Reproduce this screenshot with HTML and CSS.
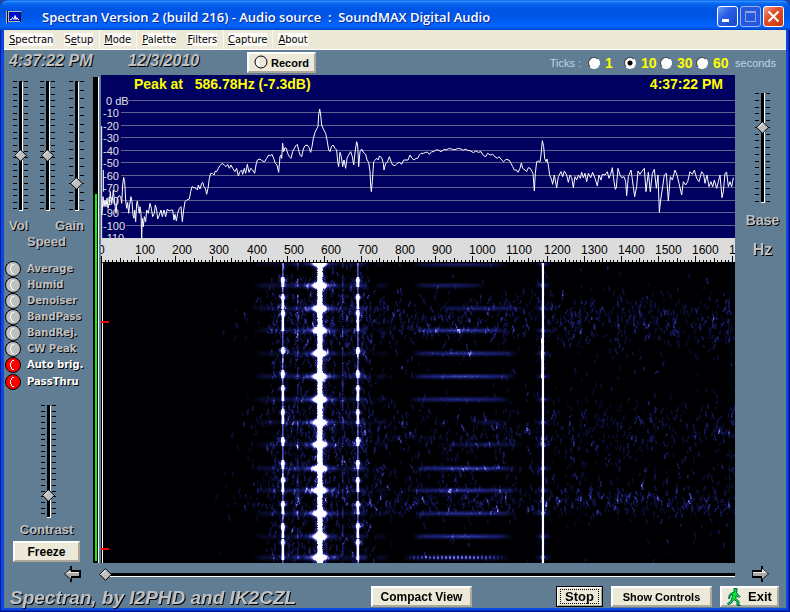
FILE: index.html
```html
<!DOCTYPE html>
<html lang="en">
<head>
<meta charset="utf-8">
<title>Spectran</title>
<link rel="stylesheet" href="styles.css">
</head>
<body>
<div class="window">
  <header class="titlebar">
    <svg class="app-icon" viewBox="0 0 16 14" aria-hidden="true"><path fill="#b8b8b8" d="M0 1h15v11H2L0 14z"/><path fill="#111" d="M1 1h1v12H1zM14 2h1v10h-1z"/><path fill="#0010c8" d="M3 2h11v9H3z"/><path fill="none" stroke="#fff" d="M4 9.500h1.500l1-2 1.500 2 1-4 1 4 1-2 1 2h1"/></svg>
    <h1 class="title">Spectran Version 2 (build 216) - Audio source &nbsp;:&nbsp; SoundMAX Digital Audio</h1>
    <div class="window-buttons">
      <button class="win-btn" aria-label="Minimize"><svg viewBox="0 0 19 19"><path fill="#fff" d="M4 12h7v3H4z"/></svg></button>
      <button class="win-btn win-btn-off" aria-label="Maximize"><svg viewBox="0 0 19 19"><path fill="none" stroke="#8ea5ee" d="M4.500 5.500h10v9h-10zM4 4.500h11"/></svg></button>
      <button class="win-btn win-btn-close" aria-label="Close"><svg viewBox="0 0 19 19"><path stroke="#fff" stroke-width="2" d="M4.500 4.500l10 10M14.500 4.500l-10 10"/></svg></button>
    </div>
  </header>
  <nav class="menubar">
    <button class="menu"><span><u>S</u>pectran</span></button>
    <button class="menu"><span>S<u>e</u>tup</span></button>
    <button class="menu menu-lit"><span><u>M</u>ode</span></button>
    <button class="menu"><span><u>P</u>alette</span></button>
    <button class="menu"><span><u>F</u>ilters</span></button>
    <button class="menu menu-lit"><span><u>C</u>apture</span></button>
    <button class="menu"><span><u>A</u>bout</span></button>
  </nav>

  <div class="toolbar">
    <time class="clock">4:37:22 PM</time>
    <time class="clock date">12/3/2010</time>
    <button class="btn record"><svg viewBox="0 0 15 15" aria-hidden="true"><circle cx="7" cy="7" r="6" fill="#ece9d8" stroke="#000"/><path d="M5 3.500a4.500 4.500 0 0 0 0 7" fill="none" stroke="#fff" stroke-width="2"/></svg>Record</button>
    <fieldset class="ticks">
      <span class="hint">Ticks :</span>
      <label class="tick"><input type="radio" name="ticks">1</label>
      <label class="tick"><input type="radio" name="ticks" checked>10</label>
      <label class="tick"><input type="radio" name="ticks">30</label>
      <label class="tick"><input type="radio" name="ticks">60</label>
      <span class="hint">seconds</span>
    </fieldset>
  </div>

  <main class="main">
    <section class="side">
      <div class="levels">
        <div class="slider"><svg viewBox="0 0 15 130" aria-hidden="true"><path class="marks" d="M2 0v129M13 0v129" stroke-dasharray="1 5.350"/><path d="M6 0h3v129H6z"/><path fill="#fff" d="M9 1h1v129H6v-1h3z"/></svg><input id="vol" type="range" value="42"></div>
        <div class="slider"><svg viewBox="0 0 15 130" aria-hidden="true"><path class="marks" d="M2 0v129M13 0v129" stroke-dasharray="1 5.350"/><path d="M6 0h3v129H6z"/><path fill="#fff" d="M9 1h1v129H6v-1h3z"/></svg><input id="speed" type="range" value="42"></div>
        <div class="slider"><svg viewBox="0 0 15 130" aria-hidden="true"><path class="marks" d="M2 0v129M13 0v129" stroke-dasharray="1 7.500"/><path d="M6 0h3v129H6z"/><path fill="#fff" d="M9 1h1v129H6v-1h3z"/></svg><input id="gain" type="range" value="18"></div>
      </div>
      <div class="level-names"><label for="vol">Vol</label><label for="gain">Gain</label></div>
      <label class="caption" for="speed">Speed</label>
      <div class="filters">
        <label><input type="checkbox">Average</label>
        <label><input type="checkbox">Humid</label>
        <label><input type="checkbox">Denoiser</label>
        <label><input type="checkbox">BandPass</label>
        <label><input type="checkbox">BandRej.</label>
        <label><input type="checkbox">CW Peak</label>
        <label><input type="checkbox" checked>Auto brig.</label>
        <label><input type="checkbox" checked>PassThru</label>
      </div>
      <div class="slider slider-contrast"><svg viewBox="0 0 15 113" aria-hidden="true"><path class="marks" d="M2 0v111M13 0v111" stroke-dasharray="1 4.700"/><path d="M6 0h3v112H6z"/><path fill="#fff" d="M9 1h1v112H6v-1h3z"/></svg><input id="contrast" type="range" value="16"></div>
      <label class="caption" for="contrast">Contrast</label>
      <button class="btn freeze">Freeze</button>
    </section>

    <div class="meter"><div class="meter-fill"></div></div>

    <section class="display">
      <svg class="spectrum" viewBox="0 0 634 188">
        <rect width="634" height="163" fill="#000060"/>
        <g id="grid"></g>
        <text class="readout" x="33" y="14" xml:space="preserve">Peak at   586.78Hz (-7.3dB)</text>
        <text class="readout" x="622" y="14" text-anchor="end">4:37:22 PM</text>
        <svg width="634" height="163" viewBox="3 0 1902 489">
          <g class="trace">
            <path d="M5 153V489M10 285V350"/>
            <polyline points="6,420 9,365 12,395 15,375 18,395 21,370 24,400 28,385 31,350 34,385 37,375 40,345 43,375 48,415 52,370 57,362 62,365 65,385 68,330 71,307 74,320 77,375 80,400 83,382 86,415 89,390 93,365 96,380 99,420 102,430 104,405 107,440 110,385 112,378 115,400 118,415 120,395 123,415 125,489 127,430 130,455 133,425 137,440 140,405 145,415 150,385 154,400 158,425 163,415 166,390 170,405 173,432 178,420 183,405 187,425 192,405 197,425 202,402 207,408 213,405 218,405 222,435 225,418 229,438 233,415 238,400 243,395 247,440 251,405 255,380 260,375 268,372 272,350 276,335 282,338 288,340 292,345 295,330 300,342 305,325 308,322 312,335 316,340 320,358 324,340 328,310 332,295 337,295 342,300 346,288 350,290 355,280 360,272 366,265 373,270 378,275 383,268 388,280 393,270 398,280 405,290 410,280 415,303 420,290 425,285 428,298 433,280 437,295 442,268 447,292 452,280 458,285 464,295 468,270 472,255 480,252 487,258 494,260 500,250 506,240 512,242 516,238 521,250 526,265 531,270 536,292 540,245 543,240 545,250 548,205 551,230 555,218 559,220 563,235 568,245 573,250 578,230 583,220 588,212 592,208 597,230 601,242 605,245 610,222 615,212 622,210 627,218 632,232 636,215 640,190 645,172 650,162 654,155 656,120 659,102 662,120 665,150 670,162 677,175 682,200 686,225 690,230 694,215 699,210 705,220 710,225 713,260 716,275 720,232 724,245 728,275 732,255 737,280 741,250 746,240 752,230 757,245 761,270 766,225 770,200 773,210 776,275 780,230 785,222 790,232 797,238 801,255 806,262 810,290 812,330 814,350 817,320 821,260 826,255 830,250 835,255 838,243 845,248 850,265 852,285 857,265 862,262 868,245 874,262 878,270 885,272 892,265 898,262 905,268 911,255 918,255 924,255 930,240 936,250 942,255 948,250 953,250 958,240 963,235"/>
            <polyline transform="translate(945)" points="18,235 25,235 32,232 38,232 43,238 50,230 57,230 62,225 70,225 78,230 86,224 95,224 103,220 112,223 120,224 130,220 138,222 145,226 150,222 158,226 168,228 175,233 182,228 190,232 198,230 206,242 212,245 218,235 226,240 233,238 240,245 247,250 252,245 260,255 266,260 273,253 282,255 288,265 293,275 298,285 304,285 309,292 315,280 319,264 323,280 330,285 335,290 340,278 346,280 351,290 354,295 358,348 361,295 365,260 370,258 375,262 378,240 382,197 386,215 389,250 393,260 396,252 400,270 404,300 410,315 413,328 418,300 425,338 430,305 438,290 443,305 448,288 455,300 460,322 465,300 470,308 475,338 480,305 485,315 490,300 496,310 500,292 505,308 510,295 515,320 520,295 527,308 533,292 540,310 547,333 552,300 558,315 562,298 570,300 577,290 582,310 587,298 592,278 597,320 601,343 604,338 609,280 615,300 620,308 627,305 632,320 635,362 640,305 648,285 655,335 659,365 665,335 669,288 675,298 680,290 688,280 693,350 700,292 706,350 712,295 718,283 724,340 729,300 733,412 737,375 743,335 748,300 754,295 760,378 766,305 772,315 780,285 786,300 792,325 800,360 805,320 812,330 818,320 825,290 832,298 838,285 845,310 852,320 860,290 866,298 870,325 876,300 882,335 888,320 893,335 898,315 905,340 910,320 915,300 921,368 925,350 930,295 935,292 940,335 945,320 950,335 955,308"/>
          </g>
        </svg>
        <rect y="163" width="634" height="25" fill="#dcdcdc"/>
        <path fill="#000" d="M0 187h634v1H0z"/>
        <g id="ruler"></g>
      </svg>
      <canvas class="waterfall" id="waterfall" width="634" height="300"></canvas>
    </section>

    <section class="base">
      <div class="slider slider-base"><svg viewBox="0 0 15 110" aria-hidden="true"><path class="marks" d="M2 0v109M13 0v109" stroke-dasharray="1 5.750"/><path d="M6 0h3v109H6z"/><path fill="#fff" d="M9 0h1v110H6v-1h3z"/></svg><input id="base" type="range" value="71"></div>
      <label class="base-name" for="base">Base</label>
      <span class="unit">Hz</span>
    </section>
  </main>

  <div class="scroll">
    <button class="arrow" aria-label="Shift left"><svg viewBox="0 0 17 16"><path d="M6 0h2v4h9v8H8v4H6v-3L0 8l6-5z"/><path fill="#a8a8a8" d="M1 8l6-4v2h8v4H7v3z"/><path fill="#e8e8e8" d="M1 8l5-4v2h9v1H6z"/></svg></button>
    <input class="position" type="range" value="0" aria-label="Position">
    <button class="arrow" aria-label="Shift right"><svg viewBox="0 0 17 16"><path d="M0 4h9V0h2v3l6 5-6 5v3H9v-4H0z"/><path fill="#a8a8a8" d="M1 6h9V3l6 5-6 5v-3H1z"/><path fill="#e8e8e8" d="M1 6h9V3l5 4H1z"/></svg></button>
  </div>

  <footer class="footer">
    <p class="credit">Spectran, by I2PHD and IK2CZL</p>
    <button class="btn wide">Compact View</button>
    <button class="btn stop"><span>Stop</span></button>
    <button class="btn wide small">Show Controls</button>
    <button class="btn exit"><svg viewBox="0 0 15 18" aria-hidden="true"><path fill="#00f020" stroke="#006060" d="M7 .5h3v3H9l2 3 2 2-1 1-3-2v3l3 3v4h2H10v-4l-3-2-3 4-3 1-.5-1 3-2 2-5v-2l-2 1-1 3H1.500l1-4 3-2H7z"/></svg>Exit</button>
  </footer>
</div>
<script src="script.js"></script>
</body>
</html>
```
FILE: styles.css
```css
* { box-sizing: border-box; }

body {
  margin: 0;
  background: #24469a;
  font-family: "Liberation Sans", Arial, sans-serif;
  font-size: 12px;
  color: #000;
}

button, input { font: inherit; margin: 0; }
button { padding: 0; border: 0; background: none; color: inherit; white-space: nowrap; }
svg { display: block; }

.window {
  min-height: 100vh;
  display: flex;
  flex-direction: column;
  padding: 0 4px 4px;
  border-radius: 8px 8px 0 0;
  background: #0a48e0;
  box-shadow: inset 1px 0 #0019a8, inset -1px 0 #00138c, inset -2px 0 #0030c0, inset 0 -1px #00138c, inset 0 -2px #0030c0;
}

/* Title bar */
.titlebar {
  display: flex;
  align-items: center;
  height: 30px;
  margin: 0 -4px;
  padding: 3px 6px 0 6px;
  border-radius: 8px 8px 0 0;
  background: linear-gradient(#0058ee 0, #3593ff 4%, #1474f2 8%, #0461ec 16%, #0055e5 30%, #0055e8 55%, #0262fb 80%, #0261fa 90%, #0243c4 100%);
}
.app-icon { width: 16px; height: 14px; }
.title {
  flex: 1;
  margin: 0 0 0 20px;
  font: 600 13px/18px "Open Sans", sans-serif;
  color: #fff;
  text-shadow: 1px 1px #0a2a90;
  white-space: nowrap;
}
.window-buttons { display: flex; gap: 2px; }
.win-btn {
  width: 21px;
  height: 21px;
  border: 1px solid #fff;
  border-radius: 3px;
  background: linear-gradient(135deg, #6f9cf8, #2a5fe6 40%, #1a46c8);
}
.win-btn-off { border-color: #9ab4f4; background: #2558dc; }
.win-btn-close { background: linear-gradient(135deg, #f0a088, #e0502c 40%, #c83808); }

/* Menus */
.menubar {
  display: flex;
  height: 20px;
  background: #ece9d8;
  border-bottom: 1px solid #fff;
  font: 11px/13px "DejaVu Sans Condensed", "DejaVu Sans", sans-serif;
}
.menu { padding: 0 5px 0 4px; border: 1px solid transparent; border-width: 0 1px; }
.menu span { display: block; background: #fcfbf8; }
.menu-lit { border-color: #faf9f2; }

/* Raised buttons */
.btn {
  display: flex;
  align-items: center;
  justify-content: center;
  height: 21px;
  background: #ece9d8;
  border: 2px solid;
  border-color: #fff #aca899 #aca899 #fff;
  font-weight: bold;
}

.toolbar {
  display: flex;
  align-items: center;
  height: 25px;
  padding: 0 10px 0 5px;
  background: #607d94;
}
.clock {
  width: 119px;
  font: italic bold 16px/20px "Liberation Sans", Arial, sans-serif;
  color: #c0c0c0;
  text-shadow: 1px 1px #000;
  padding-bottom: 3px;
}
.record { width: 69px; gap: 2px; font-size: 11px; }
.record svg { width: 15px; height: 15px; }
.ticks {
  display: flex;
  align-items: center;
  margin: 0 0 0 auto;
  padding: 0;
  border: 0;
  font-size: 11px;
}
.hint { color: #b4d8f0; }
.hint:first-child { margin-right: 7px; }
.hint:last-child { margin-left: 3px; }
.tick {
  display: flex;
  align-items: center;
  gap: 5px;
  width: 36px;
  font-size: 14px;
  font-weight: bold;
  color: #ff0;
}
.tick input {
  appearance: none;
  flex: none;
  width: 12px;
  height: 12px;
  border: 1px solid;
  border-color: #404040 #fff #fff #404040;
  border-radius: 50%;
  background: #fff;
}
.tick input:checked { background: radial-gradient(circle, #000 2px, #fff 3px); }

/* Control panel */
.main {
  display: grid;
  grid-template-columns: 89px 8px 1fr 51px;
  flex: 1;
  background: #607d94;
}
.side { display: flex; flex-direction: column; padding-top: 6px; }
.levels { display: grid; grid-template-columns: 27px 29px auto; padding-left: 9px; }

.slider { display: grid; width: 15px; height: 130px; }
.slider svg, .slider input { grid-area: 1 / 1; }
.slider svg { width: 15px; height: 100%; }
.marks { stroke: #000; stroke-width: 4; shape-rendering: crispEdges; }
.slider input {
  appearance: none;
  writing-mode: vertical-lr;
  direction: rtl;
  width: 15px;
  height: 100%;
  background: none;
}
.slider input::-webkit-slider-runnable-track { background: none; }
input[type="range"]::-webkit-slider-thumb {
  appearance: none;
  width: 13px;
  height: 13px;
  border: 0;
  background: url("data:image/svg+xml,%3Csvg xmlns='http://www.w3.org/2000/svg' viewBox='0 0 13 13'%3E%3Cpath d='M6.500 .7l5.800 5.800-5.800 5.800L.7 6.500z' fill='%23c0c0c0' stroke='%23000'/%3E%3Cpath d='M2 6.500L6.500 2' stroke='%23fff'/%3E%3C/svg%3E") center / 13px 13px no-repeat;
}
.slider-contrast { height: 113px; margin: 14px 0 0 37px; }

.level-names, .caption {
  font-size: 13px;
  font-weight: bold;
  line-height: 16px;
  color: #c0c0c0;
  text-shadow: 1px 1px #000;
}
.level-names { display: flex; justify-content: space-between; padding: 7px 9px 0 5px; }
.caption { text-align: center; padding-right: 4px; }
.slider-contrast + .caption { padding-top: 4px; }

.filters { margin-top: 11px; padding-left: 1px; }
.filters label {
  display: flex;
  align-items: center;
  gap: 6px;
  height: 16px;
  font: bold 10px/16px "DejaVu Sans", Verdana, sans-serif;
  color: #c0c0c0;
  text-shadow: 1px 1px #000;
  white-space: nowrap;
}
.filters label:last-child { height: 18px; }
.filters input {
  appearance: none;
  flex: none;
  width: 16px;
  height: 16px;
  border: 1px solid #000;
  border-radius: 50%;
  background: radial-gradient(circle at 10px 7px, #c0c0c0 5px, #fff 5px, #fff 6px, transparent 6px) 0 0 / 8px 14px no-repeat #c0c0c0;
}
.filters label:has(:checked) { color: #fff; }
.filters input:checked { background: radial-gradient(circle at 10px 7px, #f00 5px, #fff 5px, #fff 6px, transparent 6px) 0 0 / 8px 14px no-repeat #f00; }
.freeze { width: 67px; margin: 3px 0 0 9px; }

/* Input level */
.meter {
  width: 6px;
  margin-top: 2px;
  padding: 117px 1px 2px 2px;
  background: #000;
  border-right: 1px solid #fff;
}
.meter-fill { width: 2px; height: 100%; background: #0f0; }

/* Spectrum and waterfall */
.spectrum, .waterfall { display: block; width: 100%; height: auto; }
.spectrum { overflow: hidden; }
.readout { font-size: 14px; font-weight: bold; fill: #ff0; white-space: pre; }
.db { font-size: 11px; fill: #e0e0e0; }
.freq { font-size: 12px; fill: #000; }
.trace { fill: none; stroke: #fff; stroke-width: 3; }

.base {
  display: flex;
  flex-direction: column;
  align-items: center;
  padding: 18px 0 0 4px;
  font-weight: bold;
  color: #c0c0c0;
  text-shadow: 1px 1px #000;
}
.slider-base { height: 110px; }
.base-name { margin-top: 8px; font-size: 14px; line-height: 18px; }
.unit { margin-top: 12px; font-size: 16px; line-height: 18px; }

/* Bottom rows */
.scroll {
  display: grid;
  grid-template-columns: 35px 1fr 51px;
  align-items: center;
  height: 22px;
  padding: 0 0 0 60px;
  background: #607d94;
}
.arrow { width: 17px; }
.scroll .arrow:last-child { margin-left: 17px; }
.position {
  appearance: none;
  width: 100%;
  height: 13px;
  background: linear-gradient(#000 3px, #fff 3px) 6px 5px / 100% 4px no-repeat;
}

.footer {
  display: flex;
  align-items: center;
  height: 23px;
  padding: 0 7px 0 6px;
  background: #607d94;
}
.footer .btn { margin-left: 8px; }
.credit {
  width: 353px;
  margin: 0;
  font: italic bold 19px/22px "Liberation Sans", Arial, sans-serif;
  color: #c0c0c0;
  text-shadow: 1px 1px #000;
  white-space: nowrap;
  padding-top: 3px;
}
.wide { width: 101px; }
.small { font-size: 11px; }
.footer .stop { width: 47px; padding: 1px; margin-left: auto; border: 1px solid #000; box-shadow: inset 1px 1px #fff, inset -1px -1px #aca899; font-size: 13px; }
.stop span { width: 39px; border: 1px dotted #000; line-height: 13px; }
.exit { width: 59px; gap: 6px; font-size: 13px; }
.exit svg { width: 15px; height: 18px; }
```
FILE: script.js
```js
const NS = "http://www.w3.org/2000/svg";

function add(parent, name, attrs, text) {
  const el = document.createElementNS(NS, name);
  for (const key in attrs) el.setAttribute(key, attrs[key]);
  if (text) el.textContent = text;
  parent.appendChild(el);
}

// Level grid, one line every 10 dB
const grid = document.getElementById("grid");
for (let i = 0; i <= 10; i++) {
  const y = 25 + Math.floor(i * 12.5);
  const x = i === 0 ? 27 : i === 10 ? 25 : 20;
  add(grid, "rect", { x, y, width: 634 - x, height: 1, fill: "#62628e" });
  add(grid, "text", { x: i ? 2 : 5, y: y + 5, class: "db" }, i ? String(-10 * i) : "0 dB");
}
add(grid, "text", { x: 2, y: 167, class: "db" }, "-110");

// Frequency ruler, one tick every 10 Hz
const ruler = document.getElementById("ruler");
for (let f = 0; f <= 1700; f += 10) {
  const x = Math.round(f * 0.3713);
  const h = f % 100 === 0 ? 6 : f % 50 === 0 ? 4 : 2;
  add(ruler, "rect", { x, y: 187 - h, width: 1, height: h, fill: "#000" });
  if (f % 100 === 0) add(ruler, "text", { x: x - 3, y: 179, class: "freq" }, String(f));
}

// Waterfall
const canvas = document.getElementById("waterfall");
const W = canvas.width, H = canvas.height;
const field = new Float32Array(W * H);
let seed = 20101203;
function rnd() {
  seed = (seed * 1664525 + 1013904223) >>> 0;
  return seed / 4294967296;
}
function put(x, y, v) {
  x = Math.round(x); y = Math.round(y);
  if (x >= 0 && x < W && y >= 0 && y < H) field[y * W + x] += v;
}
function bell(d, s) { return Math.exp(-d * d / (2 * s * s)); }

const pulses = [0, 22, 45, 67, 90, 113, 136, 159, 181, 205, 227, 250, 273, 294];
const keyed = [[15, 22], [32, 44], [48, 66], [85, 89], [108, 113], [123, 136], [147, 159], [175, 181], [198, 204], [215, 227], [239, 249], [261, 273], [277, 295]];

function density(x, y) {
  const bands = 0.7 * bell(y - 56, 14) + 0.5 * bell(y - 165, 13) + 0.2 * bell(y - 208, 12) + bell(y - 237, 7);
  let d = 0.05 + bands;
  if (x > 165 && x < 270) d += 0.4;
  if (y > 262 && x > 280) d *= 0.4;
  if (y < 22 && x > 275) d *= 0.3;
  if (x < 170) d *= bell(170 - x, 22) * 0.6;
  return d;
}
for (let i = 0; i < 14000; i++) {
  let x = rnd() * W, y = rnd() * H;
  if (rnd() > density(x, y)) continue;
  const len = 2 + rnd() * 4, slope = (rnd() - 0.5) * 0.9, v = 0.08 + rnd() * rnd() * 0.26;
  for (let k = 0; k < len; k++, y++, x += slope) {
    put(x, y, v);
    put(x + 1, y, v * 0.6);
  }
}

// Faint harmonics
[[35, 0.14], [145, 0.14], [196, 0.26], [241, 0.3], [293, 0.14], [404, 0.16], [479, 0.2], [516, 0.3], [553, 0.14], [627, 0.22]].forEach(([x, v]) => {
  for (let y = 0; y < H; y++) {
    const gate = x > 150 && x < 260 ? 1 : Math.min(1, density(x, y));
    if (Math.sin(y * 0.35 + x) + rnd() > 0.2) {
      put(x, y, v * gate);
      put(x + 1, y, v * gate * 0.5);
    }
  }
});

// Speech-like bars
const bars = [[1, 318, 400, 0.24], [22, 319, 378, 0.26], [45, 345, 418, 0.26], [67, 320, 400, 0.4], [90, 318, 410, 0.36], [113, 318, 408, 0.42], [136, 315, 402, 0.34], [159, 375, 402, 0.16], [181, 350, 415, 0.2], [205, 321, 408, 0.42], [227, 315, 412, 0.36], [250, 320, 408, 0.36], [273, 318, 405, 0.4], [294, 310, 400, 0.4]];
bars.forEach(([y, a, b, v]) => {
  for (let x = a - 8; x < b + 8; x++) {
    const t = (x - a) / (b - a);
    const e = Math.min(1, (x - a + 8) / 10, (b + 8 - x) / 14) * (0.6 + 0.45 * bell(t - 0.5, 0.25));
    const beat = y === 294 ? (x % 4 < 2 ? 1.5 : 0.5) : 1;
    for (let k = -3; k <= 3; k++) put(x, y + k, v * e * beat * bell(k, 1.6) * (0.85 + rnd() * 0.3));
  }
});

// Pulses beside the main carrier
pulses.forEach((y, i) => {
  [[162, 0.13, 5], [172, 0.14, 4], [184, 0.25, 4], [195, 0.34, 3], [205, 0.38, 3], [212, 0.25, 3], [232, 0.36, 3], [242, 0.12, 4], [253, 0.2, 4], [261, 0.26, 3], [280, 0.12, 4]].forEach(([cx, v, s]) => {
    for (let x = cx - 12; x < cx + 12; x++)
      for (let k = -4; k <= 4; k++) put(x, y + k, v * (0.7 + (i * 7 % 4) * 0.12) * bell(x - cx, s) * bell(k, 1.8));
  });
  for (let x = 200; x < 239; x++)
    for (let k = -5; k <= 5; k++) put(x, y + k, 2.6 * bell(x - 218.500, 4.2) * bell(k, 2));
  for (let x = 430; x < 454; x++)
    for (let k = -3; k <= 3; k++) put(x, y + k, 0.3 * bell(x - 441.500, 4) * bell(k, 1.5));
});

// Carriers
for (let y = 0; y < H; y++) {
  for (let x = 216; x <= 221; x++) put(x, y, x === 216 || x === 221 ? 0.35 + rnd() * 0.5 : 2);
  for (const d of [-6, -5, -4, -3, 3, 4, 5, 6]) put(218.500 + d, y, rnd() * (0.6 - Math.abs(d) * 0.08));
  put(441, y, 2); put(442, y, 1.5); put(440, y, y > 75 && y < 115 ? 0.8 : 0.3); put(443, y, 0.25 * rnd());
  for (const c of [181, 256]) {
    put(c, y, 0.5); put(c + 1, y, 0.4);
    keyed.forEach(([a, b]) => {
      if (y >= a - 1 && y <= b + 1) {
        put(c, y, 1.5); put(c + 1, y, 1.5); put(c - 1, y, 0.5); put(c + 2, y, 0.3);
      }
    });
  }
}
for (const c of [181, 256])
  keyed.forEach(([a]) => {
    for (let x = -6; x <= 7; x++)
      for (let k = -3; k <= 3; k++) put(c + x, a + 2 + k, 0.7 * bell(x - 0.5, 2.400) * bell(k, 1.5));
  });

// Palette: black, blue, white
const ctx = canvas.getContext("2d");
const img = ctx.createImageData(W, H);
for (let i = 0; i < W * H; i++) {
  const v = Math.min(1, field[i]);
  const hi = Math.max(0, v - 0.35) / 0.65;
  img.data[i * 4] = v * 80 + hi * 175;
  img.data[i * 4 + 1] = v * 95 + hi * 160;
  img.data[i * 4 + 2] = 2 + Math.min(253, v * 350);
  img.data[i * 4 + 3] = 255;
}
ctx.putImageData(img, 0, 0);
ctx.fillStyle = "#fff";
ctx.fillRect(1, 0, 1, H);
ctx.fillStyle = "#f00";
ctx.fillRect(0, 58, 8, 2);
ctx.fillRect(0, 285, 8, 2);
```
